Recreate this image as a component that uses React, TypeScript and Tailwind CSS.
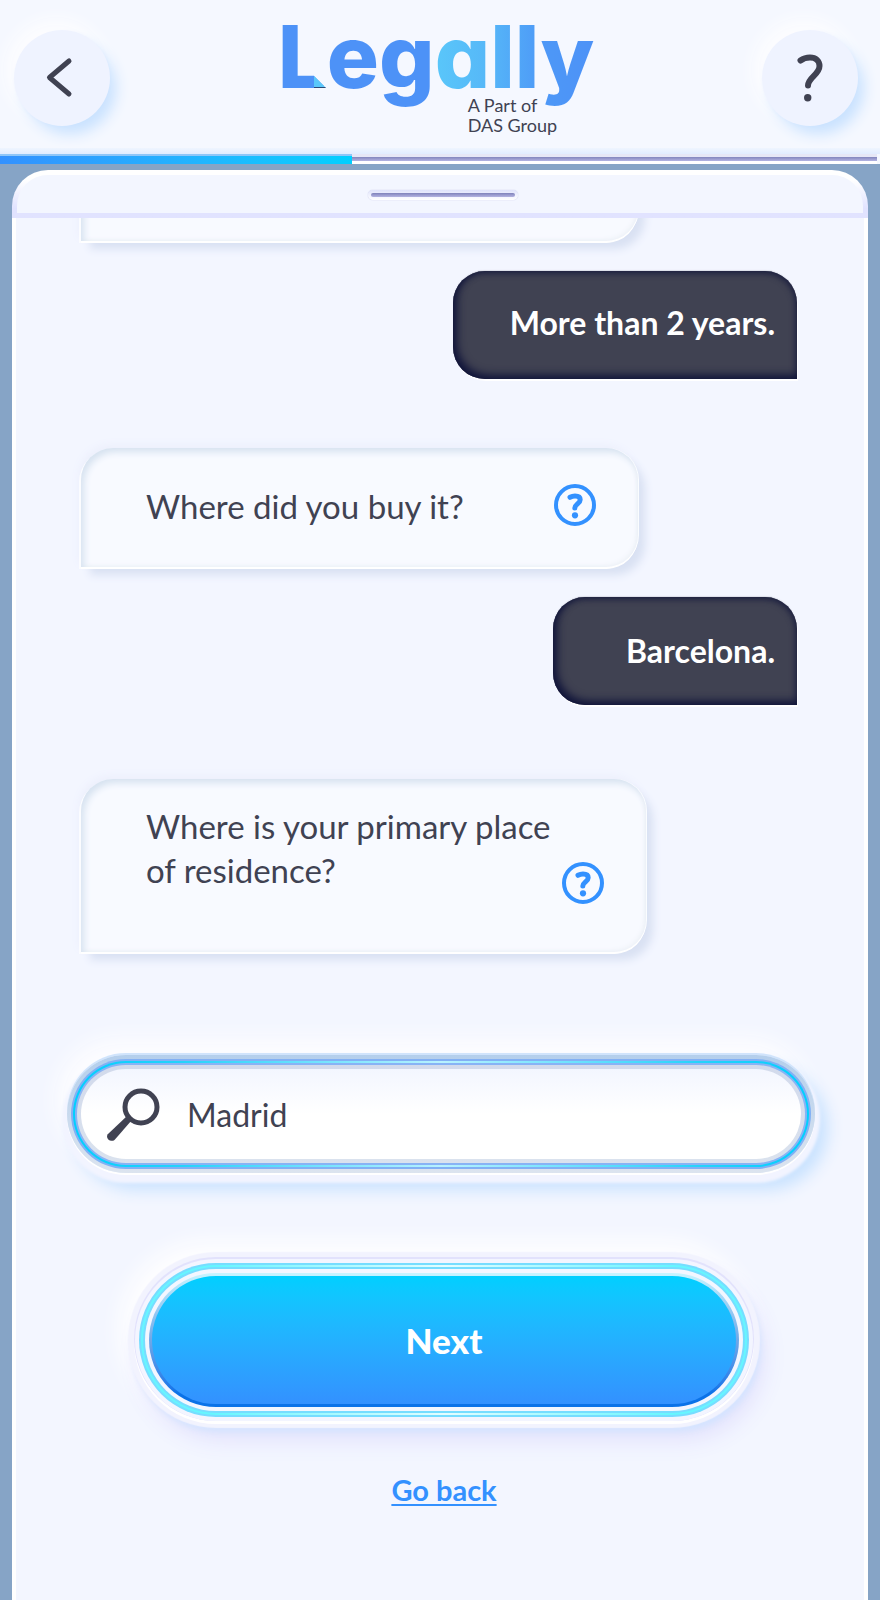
import { useState } from "react";
import type { ReactNode } from "react";

const roundButton =
  "flex size-24 shrink-0 items-center justify-center rounded-full bg-[#eff3ff] text-[#404252] shadow-[8px_10px_14px_-2px_#c9e2ff,-6px_-8px_18px_2px_#fdfdff,0_0_2px_1px_#eff3ff]";

function HelpIcon() {
  return (
    <svg viewBox="0 0 42 42" className="size-[42px]" fill="none" aria-hidden="true">
      <circle cx="21" cy="21" r="19" stroke="#3391ff" strokeWidth="4" />
      <path
        d="M16 13.300c1.600-.9 3.200-1.300 5-1.300 3.200 0 5.200 1.300 5.200 3.700 0 3.700-5.400 4.600-5.400 8.300"
        stroke="#3391ff"
        strokeWidth="5"
        strokeLinecap="round"
        strokeLinejoin="round"
      />
      <circle cx="21" cy="31.300" r="3.100" fill="#3391ff" />
    </svg>
  );
}

function Header() {
  return (
    <header className="bg-[#f5f8ff]">
      <div className="flex h-[148px] items-start justify-between pt-[30px] pr-[22px] pl-[14px]">
        <button type="button" aria-label="Back" className={roundButton}>
          <svg viewBox="0 0 96 96" className="size-24" fill="none" aria-hidden="true">
            <path d="M55 31 35.500 47.500 55 64" stroke="currentColor" strokeWidth="5" strokeLinecap="round" strokeLinejoin="round" />
          </svg>
        </button>
        <div className="relative -mt-[30px] pt-3 leading-none">
          <div className="bg-[linear-gradient(90deg,#4d92f7_48%,#5ac8fa_48%,#56b8f8_66%,#4d98f7_84%,#4d92f7)] bg-clip-text pb-4 font-[Inter] text-[87px] leading-[90px] font-extrabold text-transparent [font-feature-settings:'cv11']">
            Legally
          </div>
          <svg viewBox="0 0 16 16" className="absolute top-[73px] left-[34px] size-4" aria-hidden="true">
            <path d="M2 0h14v16h-1L2 3Z" fill="#f5f8ff" />
            <path d="M2 3 14 15H2Z" fill="#5ac8fa" />
            <path d="M2 14h11l1 1H2Z" fill="#2b4a78" />
          </svg>
          <p className="absolute top-[95px] left-[190px] font-[Lato] text-[18px] leading-[20px] whitespace-nowrap text-[#404252]">
            A Part of
            <br />
            DAS Group
          </p>
        </div>
        <button type="button" aria-label="Help" className={roundButton}>
          <svg viewBox="0 0 96 96" className="size-24" fill="none" aria-hidden="true">
            <path
              d="M38.500 30.500c2.700-2 6-3 9.500-3 6 0 9.500 3.500 9.500 8.500 0 8.500-11.500 11.500-11.500 19.500"
              stroke="currentColor"
              strokeWidth="6"
              strokeLinecap="round"
            />
            <circle cx="45.700" cy="67.700" r="3.700" fill="currentColor" />
          </svg>
        </button>
      </div>
      <div className="h-[6px] bg-linear-to-b from-[#eff5ff] to-[#e1ecff]" />
      <div
        role="progressbar"
        aria-label="Progress"
        aria-valuenow={40}
        aria-valuemin={0}
        aria-valuemax={100}
        className="flex h-[10px] bg-[#f5f8ff]"
      >
        <div className="w-2/5 border-t-2 border-[#8fc6f8] bg-linear-to-r from-[#3391ff] to-[#00cfff]" />
        <div className="mr-[3px] grow border-t-[3px] border-b-[3px] border-t-[#e6e7f6] border-b-white bg-linear-to-b from-[#8285bd] to-[#b4b4e2]" />
      </div>
    </header>
  );
}

const questionLook =
  "flex rounded-t-[32px] rounded-br-[32px] bg-[#f8faff] text-[33px] leading-[44px] text-[#404252] shadow-[inset_3px_4px_7px_#d6e2f0,inset_-2px_-2px_4px_#f1f4f9,0_2px_0_#fff,1px_0_0_#fafcff,-2px_2px_0_#fbfcff,8px_9px_9px_-1px_#d9e1f3,-2px_-3px_8px_#eceffc]";

function Question({ children, className }: { children: ReactNode; className: string }) {
  return (
    <div className={`${questionLook} ${className}`}>
      <p className="grow">{children}</p>
      <button type="button" aria-label="More about this question" className="size-[42px] shrink-0 self-end">
        <HelpIcon />
      </button>
    </div>
  );
}

function Answer({ children, className }: { children: ReactNode; className: string }) {
  return (
    <div
      className={`ml-auto flex h-[108px] w-fit items-center justify-end rounded-t-[32px] rounded-bl-[32px] bg-[#404252] pr-[22px] text-[32px] leading-[44px] font-bold text-white shadow-[inset_4px_-4px_8px_#10143a,inset_-1px_2px_6px_#1c2040,1px_2px_0_#fff,0_-1px_1px_#dcdfe8] ${className}`}
    >
      {children}
    </div>
  );
}

function SearchField() {
  const [city, setCity] = useState("Madrid");
  return (
    <label className="block rounded-full bg-linear-to-b from-[#b4cfec] to-[#dce4ef] p-1 shadow-[0_-2px_0_#d0e4fc,0_2px_0_#fff,0_5px_3px_5px_#f2f4ff,10px_14px_16px_3px_#c8e2ff,-8px_-14px_22px_2px_#fdfdff]">
      <span className="block rounded-full bg-[#82b0f4] p-[2px]">
        <span className="block rounded-full bg-[linear-gradient(90deg,#00cfff,#25d3fb_15%,#b8f2ff_50%,#25d3fb_85%,#00cfff)] p-[2px]">
          <span className="block rounded-full bg-[#88b3f5] p-[2px]">
            <span className="block rounded-full bg-linear-to-b from-[#d2daec] to-[#dae2ee] p-1">
              <span className="flex h-[90px] items-center rounded-full bg-linear-to-b from-[#f3f6ff] to-white to-50% pt-[2px] pr-8 pl-[25px]">
                <svg viewBox="0 0 54 54" className="size-[54px] shrink-0" fill="none" aria-hidden="true">
                  <circle cx="35" cy="19" r="16" stroke="#404252" strokeWidth="5" />
                  <path d="m21 28 4.500 4.500L8.500 52C5 54.500-.5 51 1.500 46.500Z" fill="#404252" />
                </svg>
                <input
                  type="text"
                  aria-label="City"
                  value={city}
                  onChange={(e) => setCity(e.target.value)}
                  className="ml-[27px] h-11 w-full min-w-0 bg-transparent text-[32px] leading-[44px] text-[#404252] outline-none"
                />
              </span>
            </span>
          </span>
        </span>
      </span>
    </label>
  );
}

function NextButton() {
  return (
    <button
      type="button"
      className="block w-full rounded-full bg-[#76ddff] p-[2px] shadow-[0_0_0_4px_#f3f5ff,0_-1px_0_5px_#e2e2fc,0_2px_0_5px_#fff,0_0_1px_11px_#f2f3fe,3px_6px_6px_9px_#d4e4ff,8px_16px_22px_8px_#e3e2fd,-8px_-10px_22px_12px_#fefeff]"
    >
      <span className="block rounded-full bg-[linear-gradient(90deg,#66f6ff_12%,#e4fdff_50%,#66f6ff_88%)] p-[2px]">
        <span className="block rounded-full bg-[#76ddff] p-[2px]">
          <span className="block rounded-full bg-[#f3f6ff] p-1">
            <span className="block rounded-full bg-linear-to-b from-[#c8f4ff] via-[#6fa8e8] to-[#0a72e8] to-90% p-[3px]">
              <span className="flex h-32 items-center justify-center rounded-full bg-linear-to-b from-[#00cfff] to-[#3391ff] text-[35px] leading-[44px] font-black text-white">
                Next
              </span>
            </span>
          </span>
        </span>
      </span>
    </button>
  );
}

export default function App() {
  return (
    <div className="flex min-h-screen flex-col bg-[#86a4c6] font-[Lato,sans-serif]">
      <Header />
      <main className="mx-3 mt-[6px] flex grow flex-col">
        <div className="rounded-t-[36px] bg-linear-to-b from-white from-20% to-[#e1e3ff] to-80% p-[5px]">
          <div className="flex h-[38px] justify-center rounded-t-[31px] bg-[#f3f6ff] pt-[15px] pl-[6px]">
            <div className="h-[10px] w-[150px] rounded-full bg-linear-to-b from-[#dfe3fb] to-white p-[3px] shadow-[0_0_1px_#a9abd6]">
              <div className="h-1 rounded-full bg-linear-to-b from-[#7f82ba] to-[#b4b4e2]" />
            </div>
          </div>
        </div>
        <div className="grow border-x-4 border-white bg-[#f3f6ff] pb-20">
          <section aria-label="Conversation" className="overflow-hidden pr-[67px] pl-[65px]">
            <div className={`${questionLook} -mt-20 h-[103px] w-[557px] max-w-full`} />
            <Answer className="mt-[30px] min-w-[344px] pb-1">More than 2 years.</Answer>
            <Question className="mt-[69px] h-[119px] w-[557px] max-w-full pt-9 pr-[42px] pb-[41px] pl-[65px]">
              Where did you buy it?
            </Question>
            <Answer className="mt-[30px] min-w-[244px]">Barcelona.</Answer>
            <Question className="mt-[74px] h-[173px] w-[565px] max-w-full pt-[25px] pr-[42px] pb-12 pl-[65px]">
              Where is your primary place of residence?
            </Question>
            <div className="h-10" />
          </section>
          <form className="mt-[63px]" onSubmit={(e) => e.preventDefault()}>
            <div className="pr-[49px] pl-[51px]">
              <SearchField />
            </div>
            <div className="mt-[90px] pr-[115px] pl-[123px]">
              <NextButton />
            </div>
            <div className="mt-[55px] pl-2 text-center">
              <a
                href="#back"
                className="text-[29px] leading-[36px] font-bold text-[#3391ff] underline decoration-2 underline-offset-3"
              >
                Go back
              </a>
            </div>
          </form>
        </div>
      </main>
    </div>
  );
}
